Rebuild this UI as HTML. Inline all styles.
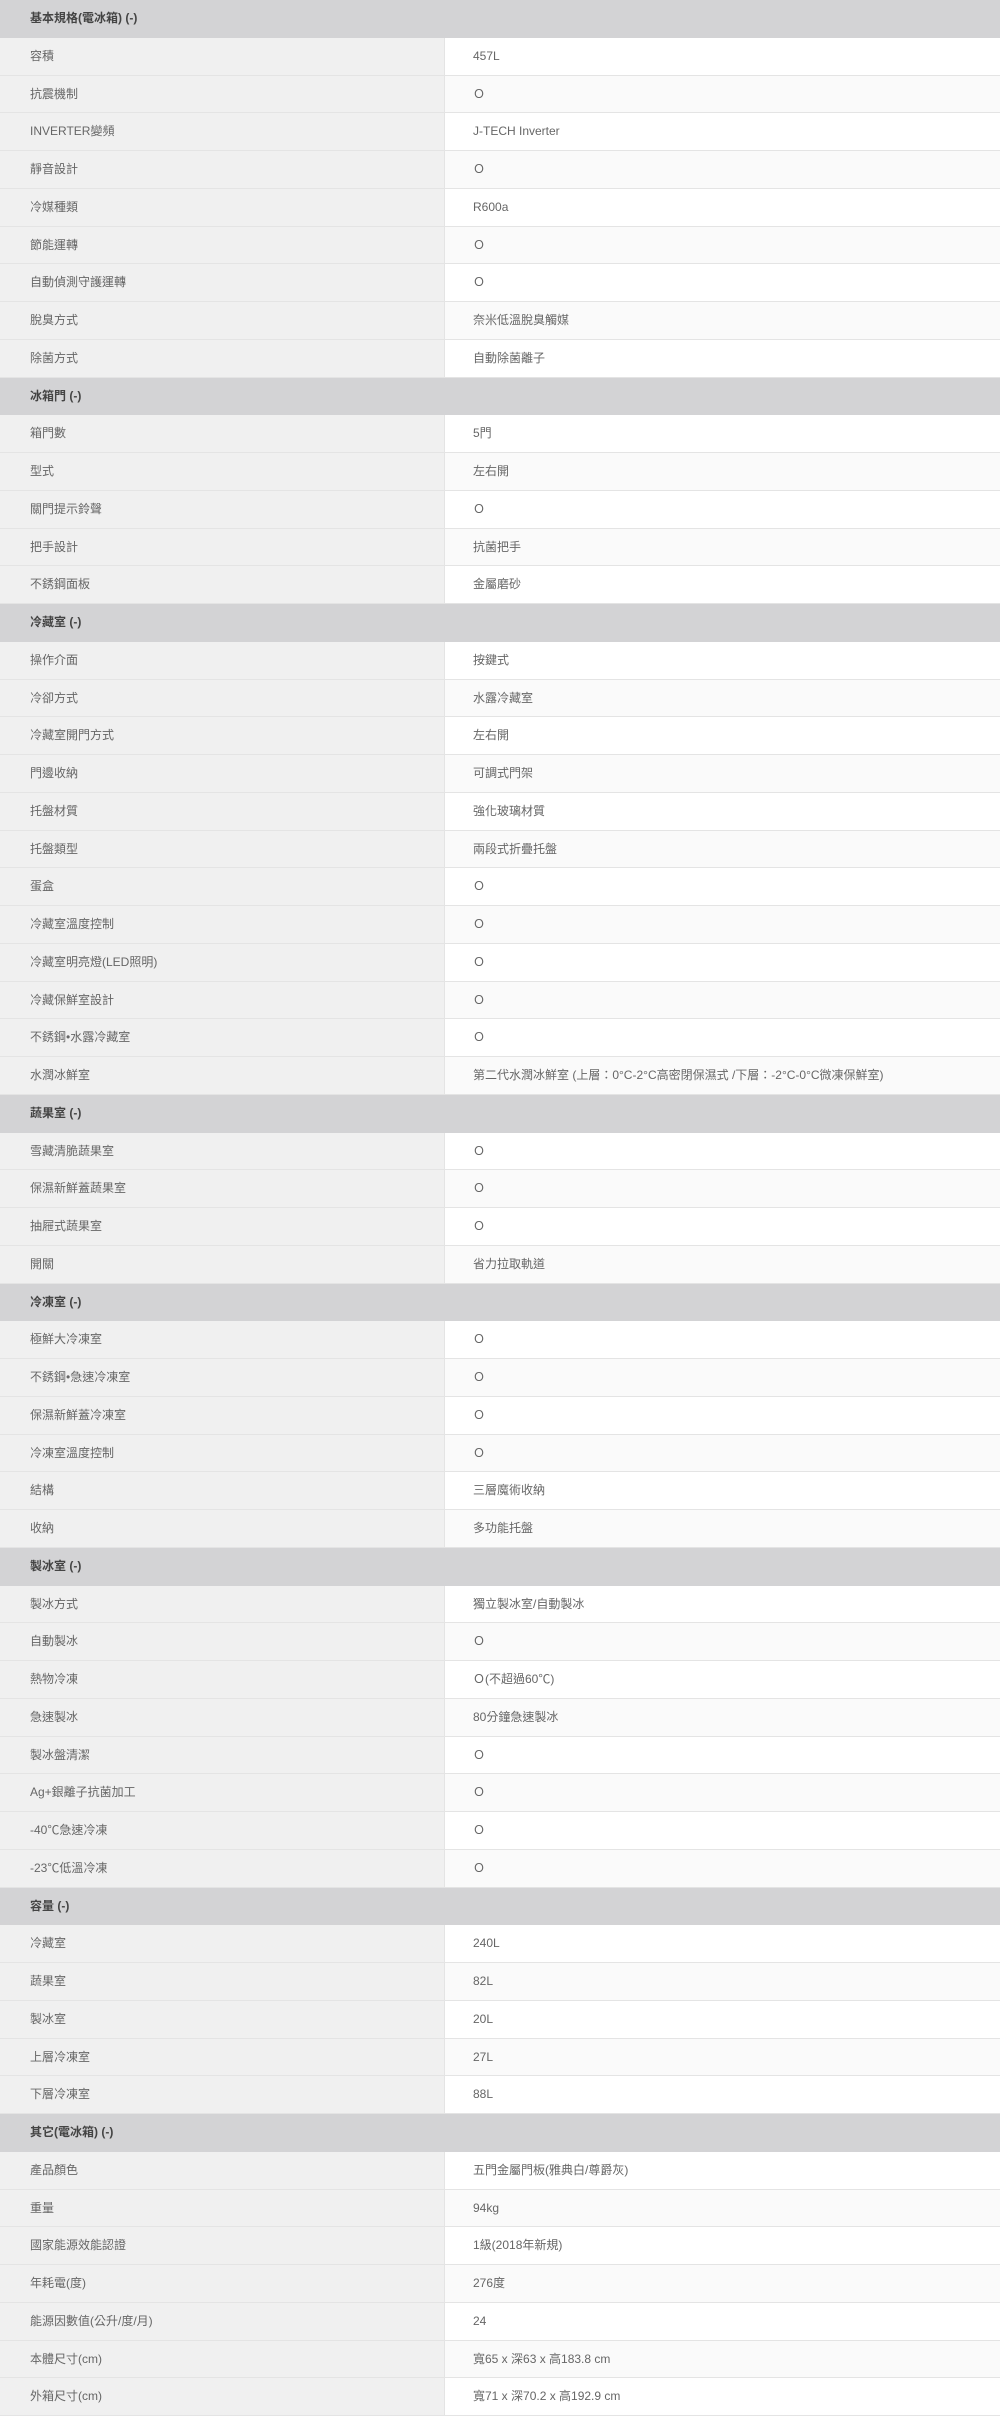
<!DOCTYPE html>
<html><head><meta charset="utf-8"><style>
*{margin:0;padding:0;box-sizing:border-box}
body{width:1000px;height:2416px;background:#fff;font-family:"Liberation Sans","Noto Sans CJK TC",sans-serif;font-size:12px;color:#666;overflow:hidden}
.r{display:flex;height:37.75px;border-bottom:1px solid #e4e4e4}
.r div{line-height:36px;height:36.75px;white-space:nowrap}
.l{width:445px;background:#f0f0f0;padding-left:30px;border-right:1px solid #e4e4e4}
.v{flex:1;padding-left:28px;background:#fff}
.r:nth-child(even) .v{background:#fafafa}
.h{height:37.75px;line-height:37px;background:#d3d3d5;padding-left:30px;font-weight:bold;color:#444}
.o{font-family:"Noto Sans CJK TC",sans-serif;font-size:12px}
</style></head><body>
<div class="h">基本規格(電冰箱) (-)</div>
<div><div class="r"><div class="l">容積</div><div class="v">457L</div></div><div class="r"><div class="l">抗震機制</div><div class="v"><span class="o">Ｏ</span></div></div><div class="r"><div class="l">INVERTER變頻</div><div class="v">J-TECH Inverter</div></div><div class="r"><div class="l">靜音設計</div><div class="v"><span class="o">Ｏ</span></div></div><div class="r"><div class="l">冷媒種類</div><div class="v">R600a</div></div><div class="r"><div class="l">節能運轉</div><div class="v"><span class="o">Ｏ</span></div></div><div class="r"><div class="l">自動偵測守護運轉</div><div class="v"><span class="o">Ｏ</span></div></div><div class="r"><div class="l">脫臭方式</div><div class="v">奈米低溫脫臭觸媒</div></div><div class="r"><div class="l">除菌方式</div><div class="v">自動除菌離子</div></div></div>
<div class="h">冰箱門 (-)</div>
<div><div class="r"><div class="l">箱門數</div><div class="v">5門</div></div><div class="r"><div class="l">型式</div><div class="v">左右開</div></div><div class="r"><div class="l">關門提示鈴聲</div><div class="v"><span class="o">Ｏ</span></div></div><div class="r"><div class="l">把手設計</div><div class="v">抗菌把手</div></div><div class="r"><div class="l">不銹鋼面板</div><div class="v">金屬磨砂</div></div></div>
<div class="h">冷藏室 (-)</div>
<div><div class="r"><div class="l">操作介面</div><div class="v">按鍵式</div></div><div class="r"><div class="l">冷卻方式</div><div class="v">水露冷藏室</div></div><div class="r"><div class="l">冷藏室開門方式</div><div class="v">左右開</div></div><div class="r"><div class="l">門邊收納</div><div class="v">可調式門架</div></div><div class="r"><div class="l">托盤材質</div><div class="v">強化玻璃材質</div></div><div class="r"><div class="l">托盤類型</div><div class="v">兩段式折疊托盤</div></div><div class="r"><div class="l">蛋盒</div><div class="v"><span class="o">Ｏ</span></div></div><div class="r"><div class="l">冷藏室溫度控制</div><div class="v"><span class="o">Ｏ</span></div></div><div class="r"><div class="l">冷藏室明亮燈(LED照明)</div><div class="v"><span class="o">Ｏ</span></div></div><div class="r"><div class="l">冷藏保鮮室設計</div><div class="v"><span class="o">Ｏ</span></div></div><div class="r"><div class="l">不銹鋼•水露冷藏室</div><div class="v"><span class="o">Ｏ</span></div></div><div class="r"><div class="l">水潤冰鮮室</div><div class="v">第二代水潤冰鮮室 (上層：0°C-2°C高密閉保濕式 /下層：-2°C-0°C微凍保鮮室)</div></div></div>
<div class="h">蔬果室 (-)</div>
<div><div class="r"><div class="l">雪藏清脆蔬果室</div><div class="v"><span class="o">Ｏ</span></div></div><div class="r"><div class="l">保濕新鮮蓋蔬果室</div><div class="v"><span class="o">Ｏ</span></div></div><div class="r"><div class="l">抽屜式蔬果室</div><div class="v"><span class="o">Ｏ</span></div></div><div class="r"><div class="l">開關</div><div class="v">省力拉取軌道</div></div></div>
<div class="h">冷凍室 (-)</div>
<div><div class="r"><div class="l">極鮮大冷凍室</div><div class="v"><span class="o">Ｏ</span></div></div><div class="r"><div class="l">不銹鋼•急速冷凍室</div><div class="v"><span class="o">Ｏ</span></div></div><div class="r"><div class="l">保濕新鮮蓋冷凍室</div><div class="v"><span class="o">Ｏ</span></div></div><div class="r"><div class="l">冷凍室溫度控制</div><div class="v"><span class="o">Ｏ</span></div></div><div class="r"><div class="l">結構</div><div class="v">三層魔術收納</div></div><div class="r"><div class="l">收納</div><div class="v">多功能托盤</div></div></div>
<div class="h">製冰室 (-)</div>
<div><div class="r"><div class="l">製冰方式</div><div class="v">獨立製冰室/自動製冰</div></div><div class="r"><div class="l">自動製冰</div><div class="v"><span class="o">Ｏ</span></div></div><div class="r"><div class="l">熱物冷凍</div><div class="v"><span class="o">Ｏ</span>(不超過60℃)</div></div><div class="r"><div class="l">急速製冰</div><div class="v">80分鐘急速製冰</div></div><div class="r"><div class="l">製冰盤清潔</div><div class="v"><span class="o">Ｏ</span></div></div><div class="r"><div class="l">Ag+銀離子抗菌加工</div><div class="v"><span class="o">Ｏ</span></div></div><div class="r"><div class="l">-40℃急速冷凍</div><div class="v"><span class="o">Ｏ</span></div></div><div class="r"><div class="l">-23℃低溫冷凍</div><div class="v"><span class="o">Ｏ</span></div></div></div>
<div class="h">容量 (-)</div>
<div><div class="r"><div class="l">冷藏室</div><div class="v">240L</div></div><div class="r"><div class="l">蔬果室</div><div class="v">82L</div></div><div class="r"><div class="l">製冰室</div><div class="v">20L</div></div><div class="r"><div class="l">上層冷凍室</div><div class="v">27L</div></div><div class="r"><div class="l">下層冷凍室</div><div class="v">88L</div></div></div>
<div class="h">其它(電冰箱) (-)</div>
<div><div class="r"><div class="l">產品顏色</div><div class="v">五門金屬門板(雅典白/尊爵灰)</div></div><div class="r"><div class="l">重量</div><div class="v">94kg</div></div><div class="r"><div class="l">國家能源效能認證</div><div class="v">1級(2018年新規)</div></div><div class="r"><div class="l">年耗電(度)</div><div class="v">276度</div></div><div class="r"><div class="l">能源因數值(公升/度/月)</div><div class="v">24</div></div><div class="r"><div class="l">本體尺寸(cm)</div><div class="v">寬65 x 深63 x 高183.8 cm</div></div><div class="r"><div class="l">外箱尺寸(cm)</div><div class="v">寬71 x 深70.2 x 高192.9 cm</div></div></div>
</body></html>
